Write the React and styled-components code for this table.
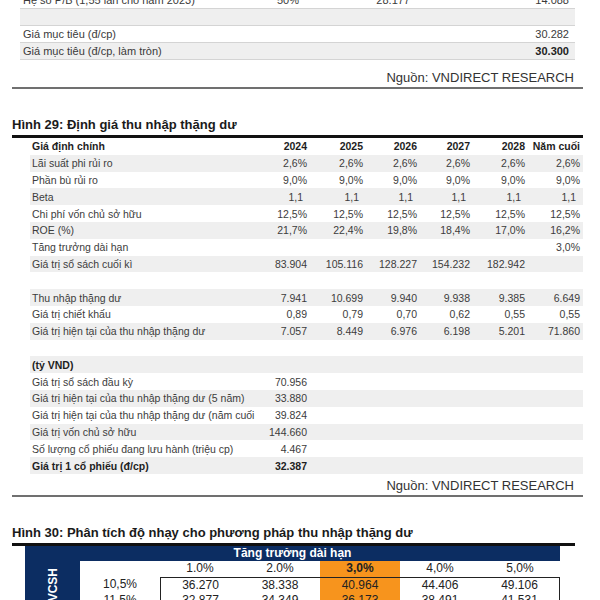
import styled, { createGlobalStyle } from 'styled-components';

const GlobalStyle = createGlobalStyle`
  html, body {
    margin: 0;
    padding: 0;
    background: #fff;
    overflow: hidden;
  }
  body {
    font-family: 'Liberation Sans', Arial, sans-serif;
    color: #333;
  }
  * { box-sizing: border-box; }
`;

const Page = styled.div`
  width: 600px;
  height: 600px;
  overflow: hidden;
  padding: 0 17px 0 12px;
`;

/* ---------- top (tail of previous figure) ---------- */

const TopTable = styled.div`
  margin: -8px 8px 0 8px;
`;

const TopRow = styled.div`
  display: grid;
  grid-template-columns: 230px 70px 87px 1fr;
  align-items: center;
  height: 17px;
  padding: 0 6px 0 3px;
  font-size: 11px;
  color: #3a3a3a;
  background: ${(p) => (p.$shade ? '#efefef' : '#fff')};
  border-bottom: 1px solid #d4d4d4;
`;

const TopCell = styled.span`
  white-space: nowrap;
  text-align: ${(p) => p.$align || 'left'};
  font-weight: ${(p) => (p.$bold ? 700 : 400)};
  color: ${(p) => (p.$bold ? '#222' : 'inherit')};
`;

const Source = styled.div`
  margin-top: ${(p) => p.$mt}px;
  padding-right: 9px;
  text-align: right;
  font-size: 13px;
  line-height: 15px;
  color: #333;
`;

const Rule = styled.div`
  margin-top: 2px;
  height: 2px;
  background: #707070;
`;

const FigTitle = styled.div`
  margin-top: 28px;
  font-size: 13px;
  line-height: 16px;
  font-weight: 700;
  color: #1a1a1a;
`;

const TitleBar = styled.div`
  margin: 2px ${(p) => p.$mr || 0}px 0 0;
  height: 3px;
  background: #111;
`;

/* ---------- Hình 29 ---------- */

const ValTable = styled.div`
  margin-left: 18px;
  width: 553px;
  font-size: 10.5px;
  color: #3c3c3c;
`;

const ValRow = styled.div`
  display: grid;
  grid-template-columns: 228px 52px 56px 54px 53px 55px 55px;
  align-items: center;
  height: 16.8px;
  background: ${(p) => (p.$shade ? '#efefef' : '#fff')};
  font-weight: ${(p) => (p.$bold ? 700 : 400)};
  color: ${(p) => (p.$bold ? '#1e1e1e' : 'inherit')};
`;

const Label = styled.span`
  min-width: 0;
  padding-left: 2px;
  white-space: nowrap;
  overflow: hidden;
`;

const Num = styled.span`
  justify-self: end;
  padding-right: ${(p) => p.$pad || 3}px;
  text-align: right;
  white-space: nowrap;
`;

/* ---------- Hình 30 ---------- */

const SensGrid = styled.div`
  display: grid;
  grid-template-columns: 55px repeat(6, 80px);
  grid-template-rows: 15px;
  grid-auto-rows: 16px;
  margin-left: 13px;
  width: 535px;
  font-size: 12px;
  color: #222;
`;

const SensHead = styled.div`
  grid-column: 1 / -1;
  background: #0c2d62;
  color: #fff;
  font-weight: 700;
  text-align: center;
  line-height: 15px;
`;

const SideCell = styled.div`
  grid-column: 1;
  grid-row: 2 / span 6;
  display: flex;
  justify-content: center;
  align-items: flex-start;
  padding-top: 7px;
  background: #0c2d62;
`;

const SideText = styled.span`
  writing-mode: vertical-rl;
  transform: rotate(180deg);
  color: #fff;
  font-weight: 700;
  white-space: nowrap;
`;

const SCell = styled.div`
  text-align: center;
  line-height: 15px;
  background: ${(p) => (p.$hot ? '#f7941d' : '#fff')};
  font-weight: ${(p) => (p.$bold ? 700 : 400)};
  border-top: ${(p) => (p.$top ? '1px solid #222' : '0')};
  border-left: ${(p) => (p.$left ? '1px solid #222' : '0')};
  border-right: ${(p) => (p.$right ? '1px solid #222' : '0')};
`;

const topRows = [
  { label: 'Hệ số P/B (1,55 lần cho năm 2023)', w: '50%', a: '28.177', b: '14.088' },
  { label: '', shade: true },
  { label: 'Giá mục tiêu (đ/cp)', b: '30.282' },
  { label: 'Giá mục tiêu (đ/cp, làm tròn)', b: '30.300', shade: true, bold: true },
];

const valRows = [
  { label: 'Giá định chính', vals: ['2024', '2025', '2026', '2027', '2028', 'Năm cuối'], bold: true },
  { label: 'Lãi suất phi rủi ro', vals: Array(6).fill('2,6%'), shade: true },
  { label: 'Phần bù rủi ro', vals: Array(6).fill('9,0%') },
  { label: 'Beta', vals: Array(6).fill('1,1'), shade: true, pad: 7 },
  { label: 'Chi phí vốn chủ sở hữu', vals: Array(6).fill('12,5%') },
  { label: 'ROE (%)', vals: ['21,7%', '22,4%', '19,8%', '18,4%', '17,0%', '16,2%'], shade: true },
  { label: 'Tăng trưởng dài hạn', vals: ['', '', '', '', '', '3,0%'] },
  { label: 'Giá trị sổ sách cuối kì', vals: ['83.904', '105.116', '128.227', '154.232', '182.942', ''], shade: true },
  { label: '', vals: [] },
  { label: 'Thu nhập thặng dư', vals: ['7.941', '10.699', '9.940', '9.938', '9.385', '6.649'], shade: true },
  { label: 'Giá trị chiết khấu', vals: ['0,89', '0,79', '0,70', '0,62', '0,55', '0,55'] },
  { label: 'Giá trị hiện tại của thu nhập thặng dư', vals: ['7.057', '8.449', '6.976', '6.198', '5.201', '71.860'], shade: true },
  { label: '', vals: [] },
  { label: '(tỷ VND)', vals: [], shade: true, bold: true },
  { label: 'Giá trị sổ sách đầu kỳ', vals: ['70.956'] },
  { label: 'Giá trị hiện tại của thu nhập thặng dư (5 năm)', vals: ['33.880'], shade: true },
  { label: 'Giá trị hiện tại của thu nhập thặng dư (năm cuối', vals: ['39.824'] },
  { label: 'Giá trị vốn chủ sở hữu', vals: ['144.660'], shade: true },
  { label: 'Số lượng cổ phiếu đang lưu hành (triệu cp)', vals: ['4.467'] },
  { label: 'Giá trị 1 cổ phiếu (đ/cp)', vals: ['32.387'], shade: true, bold: true },
];

const growth = ['1.0%', '2.0%', '3,0%', '4,0%', '5,0%'];

const sensRows = [
  { ke: '10,5%', vals: ['36.270', '38.338', '40.964', '44.406', '49.106'] },
  { ke: '11,5%', vals: ['32.877', '34.349', '36.173', '38.491', '41.531'] },
  { ke: '12,5%', vals: ['30.060', '31.146', '32.387', '34.095', '36.217'] },
  { ke: '13,5%', vals: ['27.680', '28.502', '29.436', '30.698', '32.233'] },
  { ke: '14,5%', vals: ['25.640', '26.280', '27.000', '27.950', '29.090'] },
];

const App = () => {
  return (
    <>
      <GlobalStyle />
      <Page>
        <TopTable>
          {topRows.map((r, i) => (
            <TopRow key={i} $shade={r.shade}>
              <TopCell>{r.label}</TopCell>
              <TopCell $align='center'>{r.w}</TopCell>
              <TopCell $align='right'>{r.a}</TopCell>
              <TopCell $align='right' $bold={r.bold}>{r.b}</TopCell>
            </TopRow>
          ))}
        </TopTable>
        <Source $mt={10}>Nguồn: VNDIRECT RESEARCH</Source>
        <Rule />

        <FigTitle>Hình 29: Định giá thu nhập thặng dư</FigTitle>
        <TitleBar />
        <ValTable>
          {valRows.map((r, i) => (
            <ValRow key={i} $shade={r.shade} $bold={r.bold}>
              <Label>{r.label}</Label>
              {r.vals.map((v, j) => (
                <Num key={j} $pad={r.pad}>{v}</Num>
              ))}
            </ValRow>
          ))}
        </ValTable>
        <Source $mt={4}>Nguồn: VNDIRECT RESEARCH</Source>
        <Rule />

        <FigTitle>Hình 30: Phân tích độ nhạy cho phương pháp thu nhập thặng dư</FigTitle>
        <TitleBar $mr={8} />
        <SensGrid>
          <SensHead>Tăng trưởng dài hạn</SensHead>
          <SideCell>
            <SideText>Chi phí VCSH</SideText>
          </SideCell>
          <SCell />
          {growth.map((g, j) => (
            <SCell key={g} $hot={j === 2} $bold={j === 2}>{g}</SCell>
          ))}
          {sensRows.map((r, i) => [
            <SCell key={`k${i}`}>{r.ke}</SCell>,
            ...r.vals.map((v, j) => (
              <SCell
                key={`v${i}-${j}`}
                $hot={j === 2}
                $top={i === 0}
                $left={j === 0}
                $right={j === 4}
              >
                {v}
              </SCell>
            )),
          ])}
        </SensGrid>
      </Page>
    </>
  );
};

export default App;
